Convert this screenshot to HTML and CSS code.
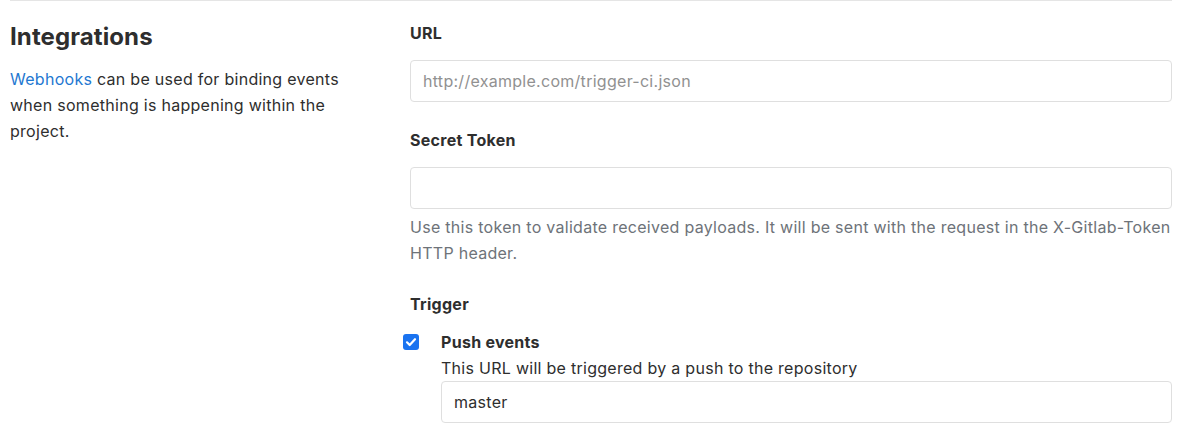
FILE: index.html
```html
<!DOCTYPE html>
<html lang="en">
<head>
<meta charset="utf-8">
<title>Integrations</title>
<link rel="stylesheet" href="styles.css">
</head>
<body>
<div class="page">
  <div class="settings-row">
    <div class="settings-intro">
      <h4 class="title">Integrations</h4>
      <p class="intro-text"><a href="#" class="link">Webhooks</a> can be used for binding events when something is happening within the project.</p>
    </div>
    <form class="settings-form">
      <div class="form-group">
        <label class="label">URL</label>
        <input class="input" type="text" placeholder="http://example.com/trigger-ci.json">
      </div>
      <div class="form-group">
        <label class="label">Secret Token</label>
        <input class="input" type="text">
        <p class="help">Use this token to validate received payloads. It will be sent with the request in the X-Gitlab-Token HTTP header.</p>
      </div>
      <div class="form-group trigger">
        <label class="label">Trigger</label>
        <div class="check-row">
          <span class="checkbox">
            <svg width="16" height="16" viewBox="0 0 16 16"><path d="M4 8.3 L6.7 11 L12 5.2" fill="none" stroke="#fff" stroke-width="2.2" stroke-linecap="round" stroke-linejoin="round"/></svg>
          </span>
          <div class="check-body">
            <div class="check-title">Push events</div>
            <div class="check-desc">This URL will be triggered by a push to the repository</div>
            <input class="input" type="text" value="master">
          </div>
        </div>
      </div>
    </form>
  </div>
</div>
</body>
</html>
```
FILE: styles.css
```css
* { box-sizing: border-box; }
html, body { margin: 0; padding: 0; background: #fff; }
body {
  font-family: Inter, "Liberation Sans", Arial, sans-serif;
  font-size: 16px;
  line-height: 26px;
  letter-spacing: 0.28px;
  color: #2e2e2e;
}
.page { padding: 0 11px 0 10px; }
.settings-row {
  display: grid;
  grid-template-columns: 400px 1fr;
  border-top: 1px solid #e5e5e5;
}
.settings-intro { padding-top: 21px; width: 360px; }
.title {
  margin: 0 0 14px;
  font-size: 24px;
  line-height: 30px;
  font-weight: 700;
  letter-spacing: 0.1px;
  color: #2e2e2e;
}
.intro-text { margin: 0; }
.link { color: #1f78d1; text-decoration: none; }
.settings-form { padding-top: 19px; }
.form-group { margin-bottom: 25px; }
.label {
  display: block;
  font-weight: 700;
  margin-bottom: 14px;
}
.input {
  display: block;
  width: 100%;
  height: 42px;
  border: 1px solid #dfdfdf;
  border-radius: 4px;
  padding: 0 12px;
  font-family: inherit;
  font-size: 16px;
  letter-spacing: 0.28px;
  color: #2e2e2e;
  background: #fff;
  outline: none;
}
.input::placeholder { color: #919191; }
.help {
  margin: 5px 0 0;
  color: #6e7379;
}
.trigger .label { margin-bottom: 12px; }
.check-row { display: flex; align-items: flex-start; }
.checkbox {
  flex: none;
  width: 16px;
  height: 16px;
  margin: 5px 22px 0 -7px;
  border-radius: 3px;
  background: #1a73f0;
  display: flex;
}
.check-body { flex: 1; }
.check-title { font-weight: 700; }
```
